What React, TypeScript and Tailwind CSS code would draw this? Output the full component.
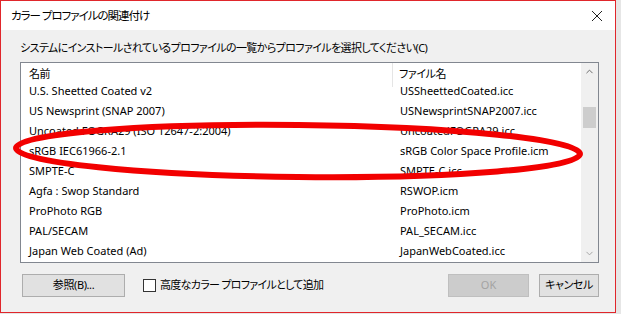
import { ChevronUp, ChevronDown } from "lucide-react"

const rows = [
  ["U.S. Sheetted Coated v2", "USSheettedCoated.icc"],
  ["US Newsprint (SNAP 2007)", "USNewsprintSNAP2007.icc"],
  ["Uncoated FOGRA29 (ISO 12647-2:2004)", "UncoatedFOGRA29.icc"],
  ["sRGB IEC61966-2.1", "sRGB Color Space Profile.icm"],
  ["SMPTE-C", "SMPTE-C.icc"],
  ["Agfa : Swop Standard", "RSWOP.icm"],
  ["ProPhoto RGB", "ProPhoto.icm"],
  ["PAL/SECAM", "PAL_SECAM.icc"],
  ["Japan Web Coated (Ad)", "JapanWebCoated.icc"],
]

export default function App() {
  return (
    <div className="relative flex w-[621px] h-[314px] overflow-hidden bg-[#e6e6e6] font-['Noto_Sans','Noto_Sans_CJK_JP',sans-serif] text-[11px] text-black [font-feature-settings:'palt']">
      {/* dialog */}
      <div className="flex flex-col w-[616px] h-[313px] border border-[#e0262b] bg-[#f0f0f0]">
        {/* title bar */}
        <div className="flex items-center justify-between h-[29px] bg-white pl-[10px] pr-[8px]">
          <span className="text-[11.5px] leading-none tracking-[-1px]">カラー プロファイルの関連付け</span>
          <svg width="12" height="12" viewBox="0 0 12 12" className="mr-[4px]">
            <path d="M1 1 L11 11 M11 1 L1 11" stroke="#222" strokeWidth="1" />
          </svg>
        </div>

        <div className="flex flex-col pl-[19px] pr-[16px]">
          <div className="h-[32px] pt-[10px] leading-[16px] tracking-[-0.6px]">
            システムにインストールされているプロファイルの一覧からプロファイルを選択してください(C)
          </div>

          {/* list box */}
          <div className="flex h-[201px] border border-[#828790] bg-white">
            <div className="flex flex-col flex-1 overflow-hidden">
              <div className="relative z-10 flex h-[24px] shrink-0 bg-white">
                <div className="w-[372px] pl-[8px] pt-[3px] border-r border-[#e5e5e5] tracking-[-0.4px]">名前</div>
                <div className="pl-[6px] pt-[3px] tracking-[-0.4px]">ファイル名</div>
              </div>
              <div className="-mt-[6px] flex flex-col">
                {rows.map(([name, file]) => (
                  <div key={name} className="flex h-[20px] items-center whitespace-nowrap">
                    <div className="w-[372px] pl-[8px] overflow-hidden">{name}</div>
                    <div className="pl-[7px]">{file}</div>
                  </div>
                ))}
              </div>
            </div>
            {/* scrollbar */}
            <div className="flex flex-col items-center w-[17px] bg-[#f0f0f0]">
              <div className="flex h-[17px] items-center justify-center">
                <ChevronUp size={11} strokeWidth={2} color="#606060" />
              </div>
              <div className="mt-[27px] w-[13px] h-[21px] bg-[#cdcdcd]" />
              <div className="flex-1" />
              <div className="flex h-[17px] items-center justify-center">
                <ChevronDown size={11} strokeWidth={2} color="#a0a0a0" />
              </div>
            </div>
          </div>

          {/* buttons */}
          <div className="flex items-center h-[23px] mt-[11px]">
            <button className="w-[103px] h-[23px] ml-[2px] border border-[#adadad] bg-[#e1e1e1] tracking-[-0.4px]">参照(B)...</button>
            <label className="flex items-center ml-[18px] gap-[4px]">
              <span className="w-[13px] h-[13px] border border-[#333] bg-white" />
              <span className="tracking-[-0.7px]">高度なカラー プロファイルとして追加</span>
            </label>
            <div className="flex-1" />
            <button className="w-[81px] h-[23px] border border-[#bfbfbf] bg-[#cccccc] text-[#a3a3a3]">OK</button>
            <button className="w-[60px] h-[23px] ml-[10px] border border-[#adadad] bg-[#e1e1e1] tracking-[-0.4px]">キャンセル</button>
          </div>
        </div>
      </div>

      {/* hand-drawn annotation */}
      <svg className="absolute inset-0 pointer-events-none" width="621" height="314">
        <ellipse cx="298" cy="151" rx="282" ry="26" fill="none" stroke="#f20000" strokeWidth="6" transform="rotate(0.6 298 151)" />
      </svg>
    </div>
  )
}
